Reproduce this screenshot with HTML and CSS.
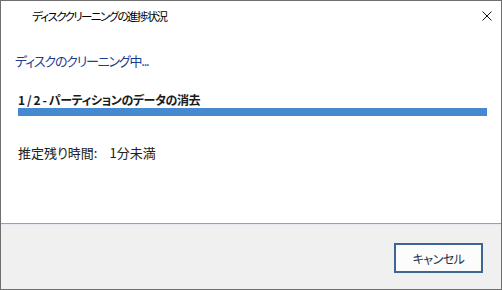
FILE: index.html
```html
<!DOCTYPE html>
<html lang="ja">
<head>
<meta charset="utf-8">
<link rel="stylesheet" href="styles.css">
</head>
<body>
<div class="window">
  <div class="titlebar">
    <span class="title">ディスククリーニングの進捗状況</span>
    <svg class="close" width="10" height="10" viewBox="0 0 10 10"><path d="M0.5 0.5L9.5 9.5M9.5 0.5L0.5 9.5" stroke="#111" stroke-width="1" fill="none"/></svg>
  </div>
  <div class="content">
    <div class="instruction">ディスクのクリーニング中...</div>
    <div class="step">1 / 2 - パーティションのデータの消去</div>
    <div class="progress"><div class="bar" style="width:100%"></div></div>
    <div class="remaining"><span>推定残り時間:</span><span>1分未満</span></div>
  </div>
  <div class="footer">
    <button class="btn">キャンセル</button>
  </div>
</div>
</body>
</html>
```
FILE: styles.css
```css
html, body {
  margin: 0;
  padding: 0;
  background: #fff;
}
body {
  font-family: "Noto Sans CJK JP", "Noto Sans", sans-serif;
  font-feature-settings: "palt";
  color: #1a1a1a;
}
.window {
  box-sizing: border-box;
  width: 502px;
  height: 290px;
  border: 1px solid #6f6f6f;
  display: flex;
  flex-direction: column;
  background: #fff;
}
.titlebar {
  height: 30px;
  display: flex;
  align-items: center;
  padding-left: 31px;
  padding-right: 9px;
  flex: none;
}
.title {
  flex: 1;
  font-size: 11.5px;
  letter-spacing: -1.6px;
  color: #000;
}
.close {
  display: block;
}
.content {
  flex: 1;
  padding: 0 14px 0 17px;
}
.instruction {
  margin-top: 21px;
  margin-left: -3px;
  font-size: 13px;
  line-height: 17px;
  letter-spacing: -1.2px;
  color: #1c3c8e;
}
.step {
  margin-top: 23px;
  font-size: 12px;
  font-weight: bold;
  line-height: 15px;
  letter-spacing: -0.4px;
  color: #1a1a1a;
}
.progress {
  margin-top: 1px;
  height: 8px;
  background: #e6e6e6;
}
.bar {
  height: 100%;
  background: #4589d0;
}
.remaining {
  margin-top: 28px;
  font-size: 13px;
  line-height: 17px;
  display: flex;
  gap: 12px;
  color: #222;
}
.footer {
  flex: none;
  height: 66px;
  border-top: 1px solid #a0a0a0;
  background: #f0f0f0;
  box-shadow: inset 0 1px 0 #e8e8f0;
  display: flex;
  justify-content: flex-end;
  align-items: flex-start;
  padding-right: 18px;
  box-sizing: border-box;
}
.btn {
  margin-top: 19px;
  width: 89px;
  height: 30px;
  box-sizing: border-box;
  border: 2px solid #3f6592;
  background: #fcfcfc;
  font-family: inherit;
  font-feature-settings: "palt";
  font-size: 12px;
  letter-spacing: -0.5px;
  color: #1e2f4a;
  padding: 0;
}
```
